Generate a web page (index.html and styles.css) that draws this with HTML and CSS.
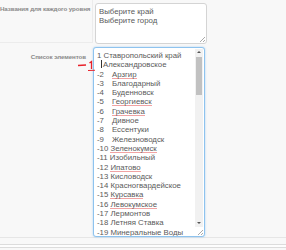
FILE: index.html
```html
<!DOCTYPE html>
<html>
<head>
	<title>Список элементов</title>
	<link rel="stylesheet" href="styles.css">
</head>
<body>
	<div class="form">
		<div class="row row-levels">
			<div class="label">Названия для каждого уровня</div>
			<div class="field">
				<div class="textarea levels">
					<div>Выберите край</div>
					<div>Выберите город</div>
					<span class="grip"></span>
				</div>
			</div>
		</div>
		<div class="row row-list">
			<div class="label">Список элементов</div>
			<div class="field">
				<div class="textarea list">
					<div class="lines">
						<div>1 Ставропольский край</div>
						<div class="indent"><span class="caret"></span>Александровское</div>
						<div><span class="num">-2</span><span class="typo">Арзгир</span></div>
						<div><span class="num">-3</span>Благодарный</div>
						<div><span class="num">-4</span>Буденновск</div>
						<div><span class="num">-5</span><span class="typo">Георгиевск</span></div>
						<div><span class="num">-6</span><span class="typo">Грачевка</span></div>
						<div><span class="num">-7</span>Дивное</div>
						<div><span class="num">-8</span>Ессентуки</div>
						<div><span class="num">-9</span>Железноводск</div>
						<div>-10 <span class="typo">Зеленокумск</span></div>
						<div>-11 Изобильный</div>
						<div>-12 <span class="typo">Ипатово</span></div>
						<div>-13 Кисловодск</div>
						<div>-14 Красногвардейское</div>
						<div>-15 <span class="typo">Курсавка</span></div>
						<div>-16 <span class="typo">Левокумское</span></div>
						<div>-17 Лермонтов</div>
						<div>-18 Летняя Ставка</div>
						<div>-19 Минеральные Воды</div>
					</div>
					<div class="scrollbar">
						<span class="arrow up"></span>
						<span class="track"><span class="thumb"></span></span>
						<span class="arrow down"></span>
					</div>
					<span class="grip"></span>
				</div>
			</div>
			<svg class="mark" width="20" height="14" viewBox="0 0 20 14">
				<path d="M1 5.5 L9 5" stroke="#e8212a" stroke-width="1.3" fill="none"/>
				<path d="M12.5 3 L14.5 1.5 L14.5 9" stroke="#e8212a" stroke-width="1.3" fill="none"/>
				<path d="M11 10.5 L18 10.3" stroke="#e8212a" stroke-width="1.1" fill="none"/>
			</svg>
		</div>
		<div class="footer"></div>
	</div>
</body>
</html>
```

FILE: styles.css
```css
body {
	background-color: #f8f8f8;
	font-family: "Liberation Sans", Arial, sans-serif;
	margin: 0;
	padding: 0;
	overflow: hidden;
}

.form {
	width: 286px;
}

.row {
	display: flex;
}

.row-levels {
	height: 44px;
}

.row-list {
	height: 193px;
	position: relative;
	border-bottom: 1px solid #e6e6e6;
}

.label {
	width: 86px;
	flex: none;
	padding: 6px 6px 0 0;
	text-align: right;
	font-size: 6.2px;
	font-weight: bold;
	color: #8a8a8a;
	white-space: nowrap;
	letter-spacing: -0.1px;
}

.row-levels .label {
	border-right: 1px solid #ececec;
	border-bottom: 1px solid #ececec;
	height: 37px;
	padding-top: 5px;
}

.row-list .label {
	padding-top: 9px;
}

.field {
	padding: 3px 0 0 0;
}

.textarea {
	position: relative;
	box-sizing: border-box;
	width: 112px;
	background-color: #fff;
	border: 1px solid #d4d4d4;
	border-radius: 3px;
	font-size: 7.8px;
	color: #5a5a5a;
	line-height: 9.3px;
}

.levels {
	height: 41px;
	padding: 3px 4px 3px 3px;
	margin-left: 2px;
}

.list {
	height: 190px;
	margin-left: 1px;
	border-color: #8ec3ee;
	box-shadow: 0 0 2px rgba(102, 175, 233, 0.6);
	padding: 3px 10px 0 3px;
	overflow: hidden;
}

.lines div {
	white-space: nowrap;
}

.indent {
	padding-left: 4px;
}

.caret {
	display: inline-block;
	width: 1px;
	height: 8px;
	background-color: #333;
	vertical-align: -1px;
	margin-right: 1px;
}

.num {
	display: inline-block;
	width: 15px;
}

/* spell-check squiggle */
.typo {
	background: linear-gradient(#f1a3a3, #f1a3a3) left bottom / 100% 1px no-repeat;
}

.grip {
	position: absolute;
	right: 1px;
	bottom: 1px;
	width: 5px;
	height: 5px;
	background: linear-gradient(135deg, transparent 45%, #aaa 45%, #aaa 55%, transparent 55%, transparent 75%, #aaa 75%, #aaa 85%, transparent 85%);
}

.scrollbar {
	position: absolute;
	right: 1px;
	top: 1px;
	bottom: 9px;
	width: 8px;
	display: flex;
	flex-direction: column;
	background-color: #f1f1f1;
}

.arrow {
	height: 7px;
	position: relative;
}

.arrow::after {
	content: "";
	position: absolute;
	left: 2px;
	top: 2px;
	border-left: 2px solid transparent;
	border-right: 2px solid transparent;
}

.arrow.up::after {
	border-bottom: 2px solid #555;
}

.arrow.down::after {
	border-top: 2px solid #555;
}

.track {
	flex: 1;
	padding: 1px;
}

.thumb {
	display: block;
	height: 38px;
	background-color: #c1c1c1;
}

.mark {
	position: absolute;
	left: 77px;
	top: 16px;
}

.footer {
	height: 2px;
	margin-top: 6px;
	border-top: 1px solid #dcdcdc;
	border-bottom: 1px solid #dcdcdc;
	background-color: #fdfdfd;
}
```
